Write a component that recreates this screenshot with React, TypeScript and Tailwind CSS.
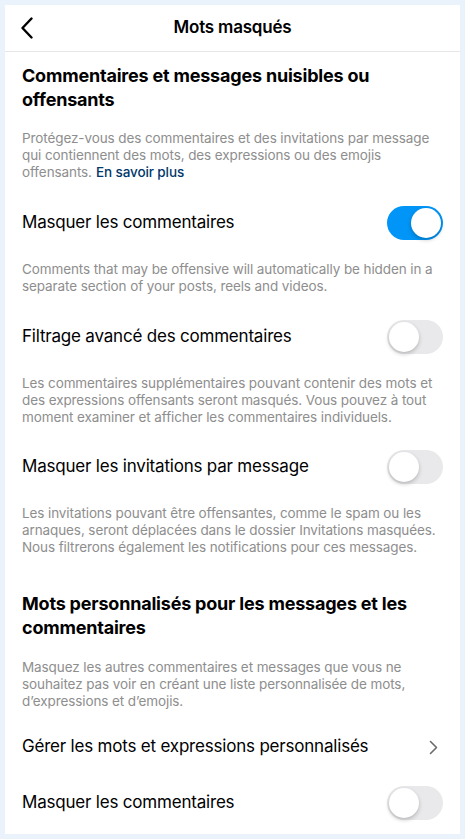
import React, { useState } from "react";

const font = { fontFamily: "Inter, 'Noto Sans', sans-serif" };

function Toggle({ on, onChange }: { on: boolean; onChange: () => void }) {
  return (
    <button
      onClick={onChange}
      className={`relative h-[34px] w-[56px] shrink-0 rounded-full transition-colors ${
        on ? "bg-[#0095f6]" : "bg-[#e9e9eb]"
      }`}
    >
      <span
        className={`absolute top-[2px] h-[30px] w-[30px] rounded-full bg-white shadow-[0_2px_4px_rgba(0,0,0,0.22)] transition-all ${
          on ? "left-[24px]" : "left-[2px]"
        }`}
      />
    </button>
  );
}

function Row({ label, children }: { label: string; children: React.ReactNode }) {
  return (
    <div className="flex h-[34px] items-center justify-between">
      <span className="text-[17px] tracking-[-0.2px] text-black">{label}</span>
      {children}
    </div>
  );
}

function Desc({ children, className = "" }: { children: React.ReactNode; className?: string }) {
  return (
    <p className={`text-[13.5px] leading-[17px] tracking-[-0.1px] text-[#8e8e8e] ${className}`}>{children}</p>
  );
}

export default function App() {
  const [hideComments, setHideComments] = useState(true);
  const [advanced, setAdvanced] = useState(false);
  const [hideRequests, setHideRequests] = useState(false);
  const [hideCustom, setHideCustom] = useState(false);

  return (
    <div className="h-[839px] w-[465px] bg-[#eaf2fb] p-[5px]" style={font}>
      <div className="h-[829px] overflow-hidden bg-white">
        {/* header */}
        <div className="relative flex h-[47px] items-center justify-center border-b border-[#e6e6e6]">
          <svg
            className="absolute left-[15px] top-[12px]"
            width="14"
            height="22"
            viewBox="0 0 14 22"
            fill="none"
            stroke="black"
            strokeWidth="2.4"
            strokeLinecap="round"
            strokeLinejoin="round"
          >
            <path d="M11.5 1.5 L2.5 11 L11.5 20.5" />
          </svg>
          <h1 className="text-[17px] font-semibold tracking-[-0.2px] text-black">Mots masqués</h1>
        </div>

        <div className="px-[17px]">
          <h2 className="mt-[12px] text-[18px] font-bold leading-[24px] tracking-[-0.2px] text-black">
            Commentaires et messages nuisibles ou offensants
          </h2>
          <Desc className="mt-[18px]">
            Protégez-vous des commentaires et des invitations par message qui contiennent des mots, des
            expressions ou des emojis offensants.
            <span className="ml-[4px] inline-block font-medium text-[#00376b]">En savoir plus</span>
          </Desc>

          <div className="mt-[25px]">
            <Row label="Masquer les commentaires">
              <Toggle on={hideComments} onChange={() => setHideComments(!hideComments)} />
            </Row>
          </div>
          <Desc className="mt-[21px]">
            Comments that may be offensive will automatically be hidden in a separate section of your posts,
            reels and videos.
          </Desc>

          <div className="mt-[25px]">
            <Row label="Filtrage avancé des commentaires">
              <Toggle on={advanced} onChange={() => setAdvanced(!advanced)} />
            </Row>
          </div>
          <Desc className="mt-[21px]">
            Les commentaires supplémentaires pouvant contenir des mots et des expressions offensants seront
            masqués. Vous pouvez à tout moment examiner et afficher les commentaires individuels.
          </Desc>

          <div className="mt-[24px]">
            <Row label="Masquer les invitations par message">
              <Toggle on={hideRequests} onChange={() => setHideRequests(!hideRequests)} />
            </Row>
          </div>
          <Desc className="mt-[21px]">
            Les invitations pouvant être offensantes, comme le spam ou les arnaques, seront déplacées dans le
            dossier Invitations masquées. Nous filtrerons également les notifications pour ces messages.
          </Desc>

          <h2 className="mt-[36px] text-[18px] font-bold leading-[24px] tracking-[-0.2px] text-black">
            Mots personnalisés pour les messages et les commentaires
          </h2>
          <Desc className="mt-[19px]">
            Masquez les autres commentaires et messages que vous ne souhaitez pas voir en créant une liste
            personnalisée de mots, d’expressions et d’emojis.
          </Desc>

          <div className="mt-[20px]">
            <Row label="Gérer les mots et expressions personnalisés">
              <svg
                className="mr-[5px]"
                width="9"
                height="15"
                viewBox="0 0 9 15"
                fill="none"
                stroke="#6b6b6b"
                strokeWidth="1.6"
                strokeLinecap="round"
                strokeLinejoin="round"
              >
                <path d="M1.5 1.5 L7.5 7.5 L1.5 13.5" />
              </svg>
            </Row>
          </div>

          <div className="mt-[22px]">
            <Row label="Masquer les commentaires">
              <Toggle on={hideCustom} onChange={() => setHideCustom(!hideCustom)} />
            </Row>
          </div>
        </div>
      </div>
    </div>
  );
}
